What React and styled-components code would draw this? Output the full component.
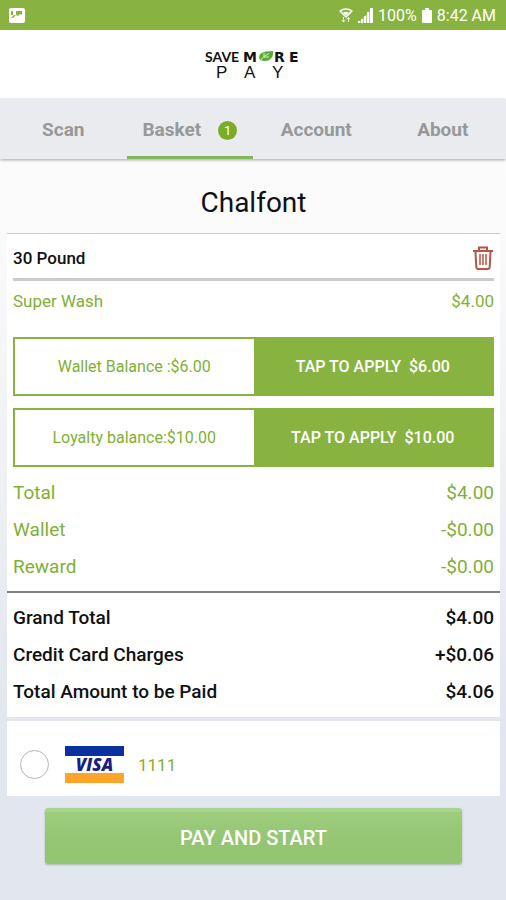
import { useState } from "react";
import styled, { createGlobalStyle } from "styled-components";

const GlobalStyle = createGlobalStyle`
  * {
    box-sizing: border-box;
  }

  body {
    margin: 0;
    min-height: 100vh;
    background: linear-gradient(#fcfcfc 160px, #fafafa 240px, #e2e6ee 720px);
    font-family: Roboto, "Liberation Sans", sans-serif;
    color: #111;
  }
`;

const StatusBar = styled.div`
  display: flex;
  align-items: center;
  height: 30px;
  padding: 1px 10px 0 9px;
  background: #88b341;
  color: #fff;
  font-size: 16px;
  line-height: 20px;
`;

const StatusInfo = styled.div`
  display: flex;
  align-items: center;
  gap: 5px;
  margin-left: auto;
`;

const Header = styled.header`
  display: flex;
  justify-content: center;
  align-items: center;
  height: 69px;
  background: #fff;
`;

const Tabs = styled.nav`
  display: grid;
  grid-template-columns: repeat(4, 1fr);
  height: 60px;
  background: #e9ebee;
  box-shadow: 0 1px 3px rgba(0, 0, 0, 0.35);
`;

const Tab = styled.a`
  display: flex;
  justify-content: center;
  align-items: center;
  gap: 17px;
  padding-top: 5px;
  border-bottom: 3px solid ${(props) => (props.$active ? "#80b75c" : "transparent")};
  color: #979899;
  font-size: 19px;
  font-weight: 700;
  line-height: 24px;
  text-decoration: none;
`;

const Badge = styled.span`
  width: 19px;
  height: 19px;
  border-radius: 50%;
  background: #7aac28;
  color: #fff;
  font-size: 13px;
  font-weight: 400;
  line-height: 19px;
  text-align: center;
`;

const Main = styled.main`
  padding: 0 6px 0 7px;
`;

const Title = styled.h1`
  margin: 0;
  padding: 28px 0 14px;
  font-size: 28px;
  font-weight: 400;
  line-height: 32px;
  text-align: center;
`;

const Card = styled.section`
  background: #fff;
`;

const OrderCard = styled(Card)`
  border-top: 1px solid #ccc;
  padding-bottom: 7px;
`;

const ItemHeader = styled.div`
  display: flex;
  justify-content: space-between;
  align-items: center;
  height: 47px;
  margin: 0 6px;
  border-bottom: 3px solid #ccc;
`;

const ItemName = styled.h2`
  margin: 0;
  padding-top: 4px;
  font-size: 17px;
  font-weight: 500;
  line-height: 24px;
`;

const DeleteButton = styled.button`
  display: flex;
  padding: 4px 0 0;
  border: 0;
  background: none;
  cursor: pointer;
`;

const ItemRow = styled.div`
  display: flex;
  justify-content: space-between;
  align-items: center;
  height: 40px;
  margin: 0 6px 16px;
  color: #80b036;
  font-size: 17px;
`;

const Balances = styled.div`
  display: grid;
  gap: 12px;
  margin: 0 6px 7px;
`;

const BalanceRow = styled.div`
  display: grid;
  grid-template-columns: 1fr 1fr;
  height: 59px;
  border: 2px solid #88b341;
  font-size: 16px;
`;

const Balance = styled.div`
  display: flex;
  justify-content: center;
  align-items: center;
  color: #80b036;
`;

const ApplyButton = styled.button`
  border: 0;
  background: #88b341;
  color: #fff;
  font-family: inherit;
  font-size: 16px;
  font-weight: 500;
  white-space: pre;
  cursor: pointer;
`;

const Summary = styled.table`
  width: 100%;
  border-collapse: collapse;
  color: ${(props) => (props.$strong ? "#111" : "#80b036")};
  font-size: 19px;

  th,
  td {
    height: 37px;
    padding: 0 6px;
    font-weight: ${(props) => (props.$strong ? 500 : 400)};
    text-align: left;
  }

  td {
    text-align: right;
  }
`;

const Divider = styled.hr`
  height: 2px;
  margin: 6px 0;
  border: 0;
  background: #808080;
`;

const PaymentCard = styled(Card)`
  margin-top: 4px;
  padding: 25px 13px 13px;
`;

const CardOption = styled.label`
  display: flex;
  align-items: center;
  width: fit-content;
  height: 37px;
  color: #80b036;
  font-size: 17px;
  cursor: pointer;
`;

const Radio = styled.input`
  appearance: none;
  width: 29px;
  height: 29px;
  margin: 0 16px 0 0;
  border: 1px solid #b5b5b5;
  border-radius: 50%;
  background: #fff;

  &:checked {
    border: 8px solid #88b341;
  }
`;

const VisaMark = styled.span`
  width: 59px;
  margin-right: 14px;
  border-top: 10px solid #0a2f9f;
  border-bottom: 10px solid #fda52b;
  color: #1a1f83;
  font-family: "Open Sans", sans-serif;
  font-size: 17px;
  font-style: italic;
  font-weight: 800;
  line-height: 17px;
  text-align: center;
`;

const PayButton = styled.button`
  display: block;
  width: calc(100% - 76px);
  height: 56px;
  margin: 12px 38px 36px;
  border: 0;
  border-top: 4px solid #a8d48d;
  border-radius: 3px;
  background: linear-gradient(#9dcd7d, #93c572 60%);
  box-shadow: 0 1px 2px rgba(80, 120, 60, 0.4);
  color: #fff;
  font-family: inherit;
  font-size: 20px;
  font-weight: 500;
  cursor: pointer;
`;

function PictureIcon() {
  return (
    <svg width="16" height="15" viewBox="0 0 16 15" aria-hidden="true">
      <rect width="16" height="15" rx="2" fill="#fff" />
      <path d="M2 3h2v4H2zM7 3h6v4l-2-1-2 2-2-1-3 3H2l3-3h2z" fill="#88b341" />
    </svg>
  );
}

function WifiIcon() {
  return (
    <svg width="14" height="15" viewBox="0 0 14 15" fill="none" stroke="#fff" aria-hidden="true">
      <path d="M1 3Q7-1 13 3L7 9z" strokeWidth="1.5" strokeLinejoin="round" />
      <path d="M4 4.5Q7 3 10 4.500L7 7.500z" fill="#fff" stroke="none" />
      <path d="M4.500 9v5M3 12l1.500 2L6 12M9.500 14V9.500M8 11.500l1.500-2 1.500 2" strokeWidth="1" opacity=".8" />
    </svg>
  );
}

function SignalIcon() {
  return (
    <svg width="15" height="15" viewBox="0 0 15 15" fill="#fff" aria-hidden="true">
      <path d="M0 15 15 0v15z" opacity=".35" />
      <path d="M0 13h2v2H0zM3 11h2v4H3zM6 8h2v7H6zM9 4h2v11H9zM12 0h3v15h-3z" />
    </svg>
  );
}

function BatteryIcon() {
  return (
    <svg width="10" height="15" viewBox="0 0 10 15" fill="#fff" aria-hidden="true">
      <path d="M3 0h4v2h2a1 1 0 0 1 1 1v11a1 1 0 0 1-1 1H1a1 1 0 0 1-1-1V3a1 1 0 0 1 1-1h2z" />
    </svg>
  );
}

function Logo() {
  return (
    <svg width="98" height="35" viewBox="0 0 98 35" role="img" aria-label="SaveMore Pay">
      <g fill="#111" fontFamily="DejaVu Sans, sans-serif">
        <text x="1" y="15" fontFamily="Lato, sans-serif" fontSize="14" fontWeight="700">
          SAVE
        </text>
        <text x="39" y="15" fontSize="14" fontWeight="700">
          M
        </text>
        <text x="70 85" y="15" fontSize="14" fontWeight="700">
          RE
        </text>
        <text x="12 40 68" y="31" fontFamily="Liberation Sans, sans-serif" fontSize="17">
          PAY
        </text>
      </g>
      <path d="M56 13C53 7 58 4 69 4c1 7-4 12-13 9z" fill="#58ae32" />
      <path d="M55 15Q59 9 65 6.500M60 10h5M60 10V6" stroke="#d9f0c8" strokeWidth="1" fill="none" />
    </svg>
  );
}

function TrashIcon() {
  return (
    <svg width="22" height="24" viewBox="0 0 22 24" fill="none" stroke="#b85443" aria-hidden="true">
      <path d="M1 5h20" strokeWidth="2" />
      <path d="M7 4.500V1.500h8v3" strokeWidth="2" />
      <path d="M3.500 6l.8 15q.2 2 2 2h9.400q1.800 0 2-2l.8-15" strokeWidth="2" />
      <path d="M8 8v11M11 8v11M14 8v11" strokeWidth="1.500" />
    </svg>
  );
}

const tabs = ["Scan", "Basket", "Account", "About"];

const balances = [
  { label: "Wallet Balance :$6.00", amount: "$6.00" },
  { label: "Loyalty balance:$10.00", amount: "$10.00" },
];

const totals = [
  ["Total", "$4.00"],
  ["Wallet", "-$0.00"],
  ["Reward", "-$0.00"],
];

const grandTotals = [
  ["Grand Total", "$4.00"],
  ["Credit Card Charges", "+$0.06"],
  ["Total Amount to be Paid", "$4.06"],
];

function SummaryTable({ rows, strong }) {
  return (
    <Summary $strong={strong}>
      <tbody>
        {rows.map(([label, value]) => (
          <tr key={label}>
            <th scope="row">{label}</th>
            <td>{value}</td>
          </tr>
        ))}
      </tbody>
    </Summary>
  );
}

export default function App() {
  const [activeTab, setActiveTab] = useState("Basket");
  const [card, setCard] = useState("");

  return (
    <>
      <GlobalStyle />
      <StatusBar>
        <PictureIcon />
        <StatusInfo>
          <WifiIcon />
          <SignalIcon />
          <span>100%</span>
          <BatteryIcon />
          <span>8:42 AM</span>
        </StatusInfo>
      </StatusBar>
      <Header>
        <Logo />
      </Header>
      <Tabs>
        {tabs.map((tab) => (
          <Tab
            key={tab}
            href={`#${tab.toLowerCase()}`}
            $active={tab === activeTab}
            onClick={() => setActiveTab(tab)}
          >
            {tab}
            {tab === "Basket" ? <Badge>1</Badge> : null}
          </Tab>
        ))}
      </Tabs>
      <Main>
        <Title>Chalfont</Title>
        <OrderCard>
          <ItemHeader>
            <ItemName>30 Pound</ItemName>
            <DeleteButton type="button" aria-label="Remove item">
              <TrashIcon />
            </DeleteButton>
          </ItemHeader>
          <ItemRow>
            <span>Super Wash</span>
            <span>$4.00</span>
          </ItemRow>
          <Balances>
            {balances.map(({ label, amount }) => (
              <BalanceRow key={label}>
                <Balance>{label}</Balance>
                <ApplyButton type="button">{`TAP TO APPLY  ${amount}`}</ApplyButton>
              </BalanceRow>
            ))}
          </Balances>
          <SummaryTable rows={totals} />
          <Divider />
          <SummaryTable rows={grandTotals} strong />
        </OrderCard>
        <PaymentCard>
          <CardOption>
            <Radio
              type="radio"
              name="card"
              value="1111"
              checked={card === "1111"}
              onChange={(e) => setCard(e.target.value)}
            />
            <VisaMark>VISA</VisaMark>
            1111
          </CardOption>
        </PaymentCard>
        <PayButton type="button">PAY AND START</PayButton>
      </Main>
    </>
  );
}
